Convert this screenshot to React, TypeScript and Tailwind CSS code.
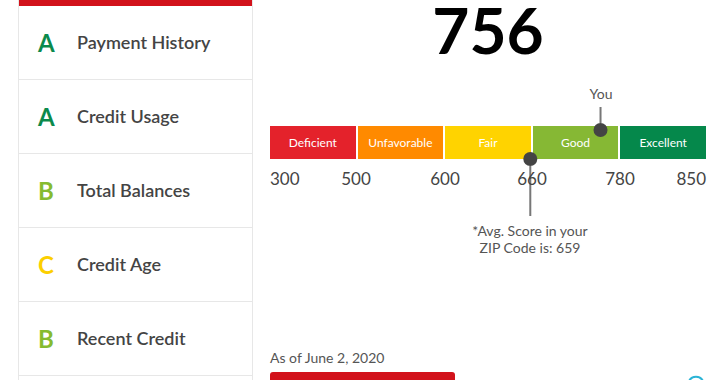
const font = { fontFamily: '"Lato", "Open Sans", sans-serif' }

const factors = [
  { grade: "A", label: "Payment History", color: "text-[#0b8a4c]" },
  { grade: "A", label: "Credit Usage", color: "text-[#0b8a4c]" },
  { grade: "B", label: "Total Balances", color: "text-[#86bb30]" },
  { grade: "C", label: "Credit Age", color: "text-[#fccf00]" },
  { grade: "B", label: "Recent Credit", color: "text-[#86bb30]" },
]

const ranges = [
  { label: "Deficient", bg: "bg-[#e4222b]" },
  { label: "Unfavorable", bg: "bg-[#ff8a00]" },
  { label: "Fair", bg: "bg-[#ffd300]" },
  { label: "Good", bg: "bg-[#86b834]" },
  { label: "Excellent", bg: "bg-[#05884b]" },
]

export default function App() {
  return (
    <div
      className="flex h-[380px] w-[720px] overflow-hidden bg-white text-[#444]"
      style={font}
    >
      {/* Factor grades */}
      <div className="ml-[18px] flex w-[235px] shrink-0 flex-col border-x border-[#e7e7e7]">
        <div className="h-[6px] bg-[#d2121b]" />
        {factors.map((f) => (
          <div
            key={f.label}
            className="flex h-[74px] shrink-0 items-center border-b border-[#e7e7e7] pl-[19px]"
          >
            <span className={`w-[39px] text-[24px] font-bold ${f.color}`}>
              {f.grade}
            </span>
            <span className="text-[18px] font-semibold text-[#444]">
              {f.label}
            </span>
          </div>
        ))}
      </div>

      {/* Score scale */}
      <div className="ml-[17px] flex w-[436px] shrink-0 flex-col">
        <div className="pt-[2px] text-center text-[64px] font-bold leading-[56px] text-black">
          756
        </div>

        <div className="relative mt-[68px]">
          {/* You marker */}
          <div className="absolute left-[331px] top-[-40px] flex -translate-x-1/2 flex-col items-center">
            <span className="text-[14px] leading-[16px] text-[#555]">You</span>
            <span className="mt-[5px] h-[16px] w-[2px] bg-[#777]" />
            <span className="h-[14px] w-[14px] rounded-full bg-[#444]" />
          </div>

          <div className="flex h-[33px] gap-[2px]">
            {ranges.map((r) => (
              <div
                key={r.label}
                className={`flex flex-1 items-center justify-center text-[12px] text-white ${r.bg}`}
              >
                {r.label}
              </div>
            ))}
          </div>

          {/* Avg marker */}
          <div className="absolute left-[260px] top-[26px] flex -translate-x-1/2 flex-col items-center">
            <span className="h-[14px] w-[14px] rounded-full bg-[#444]" />
            <span className="h-[50px] w-[2px] bg-[#777]" />
            <span className="mt-[6px] whitespace-nowrap text-center text-[14px] leading-[17px] text-[#555]">
              *Avg. Score in your
              <br />
              ZIP Code is: 659
            </span>
          </div>

          <div className="relative mt-[9px] h-[22px] text-[17px] leading-[22px] text-[#444]">
            <span className="absolute left-0">300</span>
            <span className="absolute left-[86px] -translate-x-1/2">500</span>
            <span className="absolute left-[175px] -translate-x-1/2">600</span>
            <span className="absolute left-[262px] -translate-x-1/2">660</span>
            <span className="absolute left-[350px] -translate-x-1/2">780</span>
            <span className="absolute right-0">850</span>
          </div>
        </div>

        <div className="mt-auto flex items-end justify-between">
          <div className="flex flex-col">
            <span className="mb-[6px] text-[14px] leading-[17px] text-[#555]">
              As of June 2, 2020
            </span>
            <div className="h-[8px] w-[185px] rounded-t-[3px] bg-[#d2121b]" />
          </div>
          <svg width="20" height="5" viewBox="0 0 20 5">
            <path d="M3 6 A8 8 0 0 1 17 6" fill="none" stroke="#2bb4d6" strokeWidth="2" />
          </svg>
        </div>
      </div>
    </div>
  )
}
